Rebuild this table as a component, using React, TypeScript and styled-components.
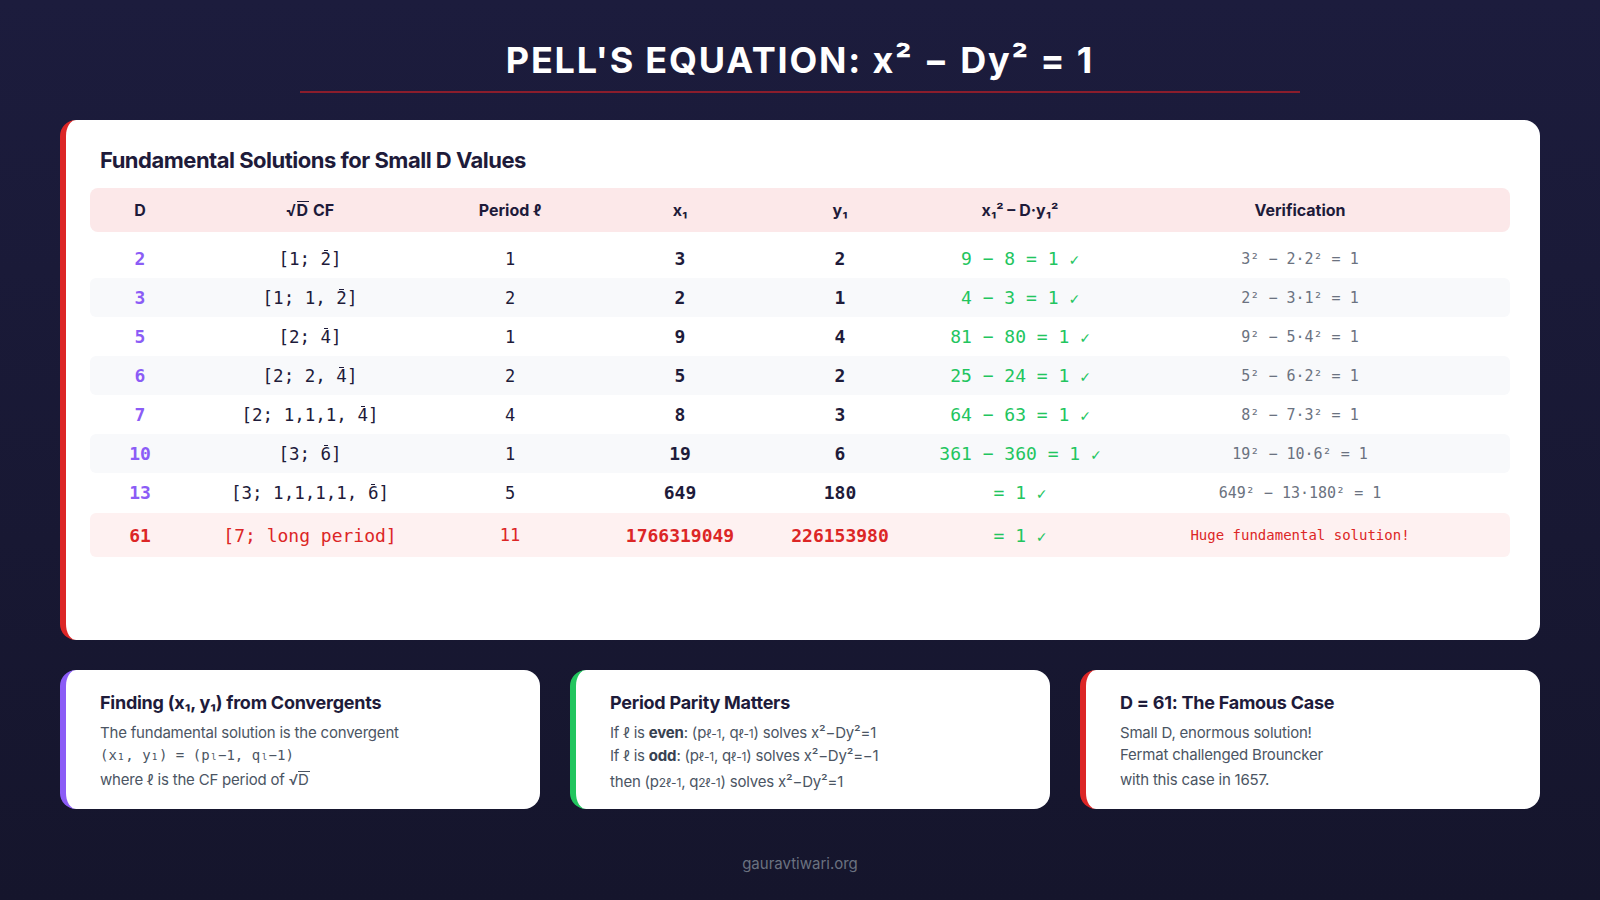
import React from "react"
import styled, { createGlobalStyle, css } from "styled-components"

const GlobalStyle = createGlobalStyle`
  * { box-sizing: border-box; }
  html, body { margin: 0; padding: 0; }
  body {
    background: #1a1a36;
    font-family: Inter, "Noto Sans", sans-serif;
  }
`

const MONO = `"DejaVu Sans Mono", "Liberation Mono", monospace`

const Page = styled.div`
  width: 1600px;
  height: 900px;
  padding: 38px 60px 0;
  display: flex;
  flex-direction: column;
  align-items: center;
  background: linear-gradient(180deg, #1c1c3d 0%, #181833 60%, #15152c 100%);
`

const Title = styled.h1`
  margin: 0;
  font-size: 36px;
  line-height: 44px;
  font-weight: 700;
  letter-spacing: 1.8px;
  color: #ffffff;
`

const Rule = styled.div`
  width: 1000px;
  height: 2px;
  margin-top: 9px;
  background: #8b1d2c;
`

const MainCard = styled.section`
  width: 1480px;
  height: 520px;
  margin-top: 27px;
  padding: 26px 30px 0 24px;
  background: #ffffff;
  border-left: 6px solid #dc2626;
  border-radius: 16px;
`

const CardTitle = styled.h2`
  margin: 0 0 14px 10px;
  font-size: 22px;
  line-height: 28px;
  font-weight: 700;
  letter-spacing: -0.5px;
  color: #1e1b3a;
`

type RowKind = "head" | "plain" | "stripe" | "hot"

const Row = styled.div<{ $kind: RowKind }>`
  display: grid;
  grid-template-columns: 100px 240px 160px 180px 140px 220px 1fr;
  align-items: center;
  height: 39px;
  border-radius: 6px;
  ${p =>
    p.$kind === "head" &&
    css`
      height: 44px;
      margin-bottom: 7px;
      background: #fce8e9;
      border-radius: 8px;
    `}
  ${p => p.$kind === "stripe" && css`background: #f8f9fb;`}
  ${p =>
    p.$kind === "hot" &&
    css`
      height: 44px;
      margin-top: 1px;
      background: #fef1f1;
    `}
`

const HeadCell = styled.div<{ $last?: boolean }>`
  text-align: center;
  font-size: 16px;
  font-weight: 700;
  color: #1e1b3a;
  padding-right: ${p => (p.$last ? "40px" : "0")};
`

type CellTone = "d" | "cf" | "period" | "num" | "ok" | "verify"

const Cell = styled.div<{ $tone: CellTone; $hot?: boolean }>`
  text-align: center;
  font-family: ${MONO};
  white-space: pre;
  color: #1e1b3a;
  font-size: 17px;
  ${p => p.$tone === "d" && css`font-size: 18px; font-weight: 700; color: #8b5cf6;`}
  ${p => p.$tone === "cf" && css`font-size: 17.5px;`}
  ${p => p.$tone === "num" && css`font-size: 18px; font-weight: 700;`}
  ${p => p.$tone === "ok" && css`font-size: 18px; color: #22c55e;`}
  ${p =>
    p.$tone === "verify" &&
    css`
      font-size: 15px;
      color: #6b7280;
      padding-right: 40px;
    `}
  ${p => p.$hot && p.$tone !== "ok" && css`color: #dc2626;`}
  ${p => p.$hot && p.$tone === "cf" && css`font-size: 18px;`}
  ${p => p.$hot && p.$tone === "verify" && css`font-size: 14px;`}
`

// repeating block of a continued fraction, marked with a bar on top
const Bar = styled.span`
  position: relative;
  &::before {
    content: "";
    position: absolute;
    left: 0.18em;
    right: 0.18em;
    top: 0.1em;
    height: 1px;
    background: currentColor;
  }
`

const Check = styled.span`
  font-size: 16px;
`

const Radicand = styled.span`
  display: inline-block;
  line-height: 1;
  border-top: 1.5px solid currentColor;
  padding: 0 1px 0 0;
`

const CardRow = styled.div`
  width: 1480px;
  margin-top: 30px;
  display: grid;
  grid-template-columns: 480px 480px 1fr;
  gap: 30px;
`

const InfoCard = styled.div<{ $accent: string }>`
  height: 139px;
  padding: 20px 24px 0 34px;
  background: #ffffff;
  border-left: 6px solid ${p => p.$accent};
  border-radius: 16px;
`

const InfoTitle = styled.h3`
  margin: 0 0 6px;
  font-size: 18px;
  line-height: 26px;
  font-weight: 700;
  letter-spacing: -0.25px;
  color: #1e1b3a;
`

const InfoLine = styled.div<{ $gap?: boolean; $mono?: boolean }>`
  font-size: 15px;
  line-height: 22px;
  letter-spacing: -0.2px;
  color: #4b5563;
  margin-top: ${p => (p.$gap ? "3px" : "0")};
  ${p => p.$mono && css`font-family: ${MONO}; font-size: 14px; letter-spacing: 0;`}
  b { font-weight: 700; color: #374151; }
`

const Small = styled.span`
  font-size: 0.8em;
`

const Footer = styled.div`
  margin-top: 45px;
  font-size: 15px;
  line-height: 20px;
  color: #6b7280;
`

type Cf = [string, string, string]

const rows: { d: string; cf: Cf; l: string; x: string; y: string; ok: string; v: string; kind: RowKind }[] = [
  { d: "2", cf: ["[1; ", "2", "]"], l: "1", x: "3", y: "2", ok: "9 − 8 = 1", v: "3² − 2·2² = 1", kind: "plain" },
  { d: "3", cf: ["[1; 1, ", "2", "]"], l: "2", x: "2", y: "1", ok: "4 − 3 = 1", v: "2² − 3·1² = 1", kind: "stripe" },
  { d: "5", cf: ["[2; ", "4", "]"], l: "1", x: "9", y: "4", ok: "81 − 80 = 1", v: "9² − 5·4² = 1", kind: "plain" },
  { d: "6", cf: ["[2; 2, ", "4", "]"], l: "2", x: "5", y: "2", ok: "25 − 24 = 1", v: "5² − 6·2² = 1", kind: "stripe" },
  { d: "7", cf: ["[2; 1,1,1, ", "4", "]"], l: "4", x: "8", y: "3", ok: "64 − 63 = 1", v: "8² − 7·3² = 1", kind: "plain" },
  { d: "10", cf: ["[3; ", "6", "]"], l: "1", x: "19", y: "6", ok: "361 − 360 = 1", v: "19² − 10·6² = 1", kind: "stripe" },
  { d: "13", cf: ["[3; 1,1,1,1, ", "6", "]"], l: "5", x: "649", y: "180", ok: "= 1", v: "649² − 13·180² = 1", kind: "plain" },
  { d: "61", cf: ["[7; long period]", "", ""], l: "11", x: "1766319049", y: "226153980", ok: "= 1", v: "Huge fundamental solution!", kind: "hot" },
]

export default function App() {
  return (
    <>
      <GlobalStyle />
      <Page>
        <Title>PELL'S EQUATION: x² − Dy² = 1</Title>
        <Rule />
        <MainCard>
          <CardTitle>Fundamental Solutions for Small D Values</CardTitle>
          <Row $kind="head">
            <HeadCell>D</HeadCell>
            <HeadCell>
              √<Radicand>D</Radicand> CF
            </HeadCell>
            <HeadCell>Period ℓ</HeadCell>
            <HeadCell>x₁</HeadCell>
            <HeadCell>y₁</HeadCell>
            <HeadCell>x₁² – D·y₁²</HeadCell>
            <HeadCell $last>Verification</HeadCell>
          </Row>
          {rows.map(r => {
            const hot = r.kind === "hot"
            return (
              <Row key={r.d} $kind={r.kind}>
                <Cell $tone="d" $hot={hot}>{r.d}</Cell>
                <Cell $tone="cf" $hot={hot}>
                  {r.cf[0]}
                  {r.cf[1] && <Bar>{r.cf[1]}</Bar>}
                  {r.cf[2]}
                </Cell>
                <Cell $tone="period" $hot={hot}>{r.l}</Cell>
                <Cell $tone="num" $hot={hot}>{r.x}</Cell>
                <Cell $tone="num" $hot={hot}>{r.y}</Cell>
                <Cell $tone="ok" $hot={hot}>
                  {r.ok} <Check>✓</Check>
                </Cell>
                <Cell $tone="verify" $hot={hot}>{r.v}</Cell>
              </Row>
            )
          })}
        </MainCard>
        <CardRow>
          <InfoCard $accent="#8b5cf6">
            <InfoTitle>Finding (x₁, y₁) from Convergents</InfoTitle>
            <InfoLine>The fundamental solution is the convergent</InfoLine>
            <InfoLine $mono>(x₁, y₁) = (pₗ−1, qₗ−1)</InfoLine>
            <InfoLine $gap>
              where ℓ is the CF period of √<Radicand>D</Radicand>
            </InfoLine>
          </InfoCard>
          <InfoCard $accent="#22c55e">
            <InfoTitle>Period Parity Matters</InfoTitle>
            <InfoLine>
              If ℓ is <b>even</b>: (p<Small>ℓ-1</Small>, q<Small>ℓ-1</Small>) solves x²−Dy²=1
            </InfoLine>
            <InfoLine>
              If ℓ is <b>odd</b>: (p<Small>ℓ-1</Small>, q<Small>ℓ-1</Small>) solves x²−Dy²=−1
            </InfoLine>
            <InfoLine $gap>
              then (p<Small>2ℓ-1</Small>, q<Small>2ℓ-1</Small>) solves x²−Dy²=1
            </InfoLine>
          </InfoCard>
          <InfoCard $accent="#dc2626">
            <InfoTitle>D = 61: The Famous Case</InfoTitle>
            <InfoLine>Small D, enormous solution!</InfoLine>
            <InfoLine>Fermat challenged Brouncker</InfoLine>
            <InfoLine $gap>with this case in 1657.</InfoLine>
          </InfoCard>
        </CardRow>
        <Footer>gauravtiwari.org</Footer>
      </Page>
    </>
  )
}
